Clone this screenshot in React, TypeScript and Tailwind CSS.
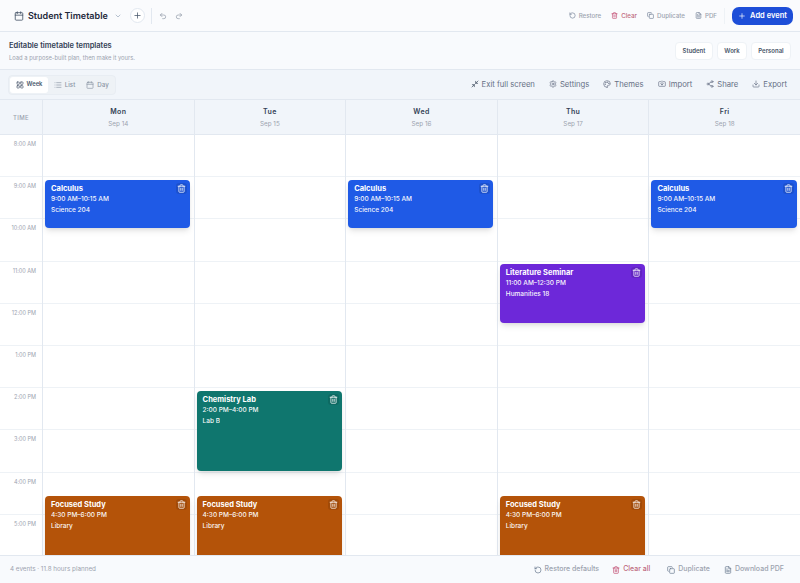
import {
  Calendar,
  ChevronDown,
  Copy,
  Download,
  FileText,
  LayoutGrid,
  List,
  Minimize2,
  Palette,
  Plus,
  Redo2,
  RotateCcw,
  Settings,
  Share2,
  Trash2,
  Undo2,
  Import,
} from "lucide-react";

type CalEvent = {
  title: string;
  time: string;
  place: string;
  top: number;
  height: number;
  color: string;
};

const days = [
  { name: "Mon", date: "Sep 14" },
  { name: "Tue", date: "Sep 15" },
  { name: "Wed", date: "Sep 16" },
  { name: "Thu", date: "Sep 17" },
  { name: "Fri", date: "Sep 18" },
];

const hours = ["8:00 AM", "9:00 AM", "10:00 AM", "11:00 AM", "12:00 PM", "1:00 PM", "2:00 PM", "3:00 PM", "4:00 PM", "5:00 PM"];

const calculus = { title: "Calculus", time: "9:00 AM–10:15 AM", place: "Science 204", top: 44.5, height: 48.5, color: "bg-[#1f5ae6]" };
const study = { title: "Focused Study", time: "4:30 PM–6:00 PM", place: "Library", top: 360.5, height: 62, color: "bg-[#b45309]" };

const events: CalEvent[][] = [
  [calculus, study],
  [{ title: "Chemistry Lab", time: "2:00 PM–4:00 PM", place: "Lab B", top: 255.5, height: 80.5, color: "bg-[#0f766e]" }, study],
  [calculus],
  [{ title: "Literature Seminar", time: "11:00 AM–12:30 PM", place: "Humanities 18", top: 128.5, height: 59.5, color: "bg-[#6d28d9]" }, study],
  [calculus],
];

function EventCard({ event }: { event: CalEvent }) {
  return (
    <div
      className={`absolute left-[2px] right-[3.5px] rounded-[4px] px-[6px] py-[4px] text-white shadow-md ${event.color}`}
      style={{ top: event.top, height: event.height }}
    >
      <div className="text-[7.5px] leading-[10.5px] font-bold">{event.title}</div>
      <div className="text-[6.5px] leading-[10.7px] font-medium opacity-95">{event.time}</div>
      <div className="text-[6.5px] leading-[10.7px] font-medium opacity-95">{event.place}</div>
      <div className="absolute right-[3px] top-[3px] flex h-[11px] w-[11px] items-center justify-center rounded-[3px] bg-black/10">
        <Trash2 size={9} />
      </div>
    </div>
  );
}

export default function App() {
  return (
    <div className="flex h-[583px] w-[800px] flex-col overflow-hidden bg-white font-['Inter',sans-serif] text-[#1f2937]">
      {/* top bar */}
      <div className="flex h-[32px] shrink-0 items-center border-b border-[#e2e8f0] bg-[#fafbfd] pl-[14px] pr-[7px]">
        <Calendar size={10} className="text-[#475569]" />
        <span className="ml-[4px] text-[9px] font-semibold text-[#1e293b]">Student Timetable</span>
        <ChevronDown size={8} className="ml-[6px] text-[#94a3b8]" />
        <div className="ml-[8px] flex h-[15px] w-[15px] items-center justify-center rounded-full border border-[#e2e8f0] bg-white">
          <Plus size={9} className="text-[#475569]" />
        </div>
        <div className="mx-[6px] h-[16px] w-px bg-[#e2e8f0]" />
        <Undo2 size={8} className="ml-[1px] text-[#8b95a5]" />
        <Redo2 size={8} className="ml-[8px] text-[#8b95a5]" />
        <div className="ml-auto flex items-center gap-[10px] text-[6.2px] font-medium text-[#9ca3af]">
          <span className="flex items-center gap-[3px]"><RotateCcw size={7} className="text-[#64748b]" />Restore</span>
          <span className="flex items-center gap-[3px] text-[#be6a80]"><Trash2 size={7} className="text-[#c0446a]" />Clear</span>
          <span className="flex items-center gap-[3px]"><Copy size={7} className="text-[#64748b]" />Duplicate</span>
          <span className="flex items-center gap-[3px]"><FileText size={7} className="text-[#64748b]" />PDF</span>
        </div>
        <div className="mx-[7px] h-[16px] w-px bg-[#eef2f6]" />
        <div className="flex h-[18px] w-[61px] items-center justify-center gap-[4px] rounded-[7px] bg-[#1d4ed8] text-[7.5px] font-semibold text-white">
          <Plus size={8} />Add event
        </div>
      </div>

      {/* templates */}
      <div className="flex h-[38px] shrink-0 items-center justify-between border-b border-[#e2e8f0] bg-[#f8fafd] pl-[9px] pr-[9px]">
        <div className="pt-[1px]">
          <div className="text-[7.5px] leading-[10px] font-semibold text-[#334155]">Editable timetable templates</div>
          <div className="mt-[3px] text-[5.8px] leading-[8px] text-[#9ca3af]">Load a purpose-built plan, then make it yours.</div>
        </div>
        <div className="flex gap-[4px] text-[6px] font-semibold text-[#475569]">
          <div className="flex h-[18px] w-[38px] items-center justify-center rounded-[4px] border border-[#eef2f6] bg-white">Student</div>
          <div className="flex h-[18px] w-[30px] items-center justify-center rounded-[4px] border border-[#eef2f6] bg-white">Work</div>
          <div className="flex h-[18px] w-[40px] items-center justify-center rounded-[4px] border border-[#eef2f6] bg-white">Personal</div>
        </div>
      </div>

      {/* view toolbar */}
      <div className="flex h-[30px] shrink-0 items-center justify-between border-b border-[#e2e8f0] bg-[#f1f5fa] pl-[8px] pr-[13px]">
        <div className="flex h-[20px] items-center rounded-[4px] border border-[#e8edf3] bg-[#eef2f6] p-[1px] text-[6.2px] font-medium text-[#8b95a5]">
          <div className="flex h-[16px] w-[38px] items-center justify-center gap-[3px] rounded-[3px] bg-white text-[5.8px] font-semibold text-[#475569]">
            <LayoutGrid size={8} />Week
          </div>
          <div className="flex h-[16px] w-[33px] items-center justify-center gap-[3px]"><List size={8} />List</div>
          <div className="flex h-[16px] w-[33px] items-center justify-center gap-[3px]"><Calendar size={8} />Day</div>
        </div>
        <div className="flex items-center gap-[14px] text-[7.7px] text-[#667085]">
          <span className="flex items-center gap-[3px]"><Minimize2 size={8} className="text-[#334155]" />Exit full screen</span>
          <span className="flex items-center gap-[3px]"><Settings size={8} />Settings</span>
          <span className="flex items-center gap-[3px]"><Palette size={8} />Themes</span>
          <span className="flex items-center gap-[3px]"><Import size={8} />Import</span>
          <span className="flex items-center gap-[3px]"><Share2 size={8} />Share</span>
          <span className="flex items-center gap-[3px]"><Download size={8} />Export</span>
        </div>
      </div>

      {/* day header */}
      <div className="grid h-[35px] shrink-0 grid-cols-[42px_repeat(5,1fr)] border-b border-[#e2e8f0] bg-[#f1f5fa]">
        <div className="flex items-center justify-center pt-[1px] text-[6px] font-medium tracking-wider text-[#9ca3af]">TIME</div>
        {days.map((day) => (
          <div key={day.name} className="flex flex-col items-center justify-center border-l border-[#e2e8f0] pt-[2px]">
            <div className="text-[7px] leading-[10px] font-semibold tracking-wider text-[#334155]">{day.name}</div>
            <div className="mt-[2px] text-[6.3px] leading-[10px] text-[#9ca3af]">{day.date}</div>
          </div>
        ))}
      </div>

      {/* week grid */}
      <div className="grid min-h-0 flex-1 grid-cols-[42px_repeat(5,1fr)] overflow-hidden bg-white">
        <div>
          {hours.map((hour) => (
            <div key={hour} className="h-[42.2px] border-b border-[#eef2f6] pr-[6px] pt-[5px] text-right text-[5.5px] leading-[8px] text-[#9ca3af]">
              {hour}
            </div>
          ))}
        </div>
        {days.map((day, i) => (
          <div key={day.name} className="relative border-l border-[#e2e8f0]">
            {hours.map((hour) => (
              <div key={hour} className="h-[42.2px] border-b border-[#eef2f6]" />
            ))}
            {events[i].map((event) => (
              <EventCard key={event.title} event={event} />
            ))}
          </div>
        ))}
      </div>

      {/* footer */}
      <div className="flex h-[28px] shrink-0 items-center justify-between border-t border-[#e2e8f0] bg-[#f8fafd] pl-[10px] pr-[16px] text-[6.5px] text-[#9ca3af]">
        <span className="text-[6.3px]">4 events · 11.8 hours planned</span>
        <div className="flex items-center text-[7px] font-medium">
          <span className="flex items-center gap-[3px]"><RotateCcw size={8} className="text-[#64748b]" />Restore defaults</span>
          <span className="ml-[13px] flex items-center gap-[3px] text-[#be6a80]"><Trash2 size={8} className="text-[#c0446a]" />Clear all</span>
          <span className="ml-[17px] flex items-center gap-[3px]"><Copy size={8} className="text-[#64748b]" />Duplicate</span>
          <span className="ml-[14px] flex items-center gap-[3px]"><FileText size={8} className="text-[#64748b]" />Download PDF</span>
        </div>
      </div>
    </div>
  );
}
